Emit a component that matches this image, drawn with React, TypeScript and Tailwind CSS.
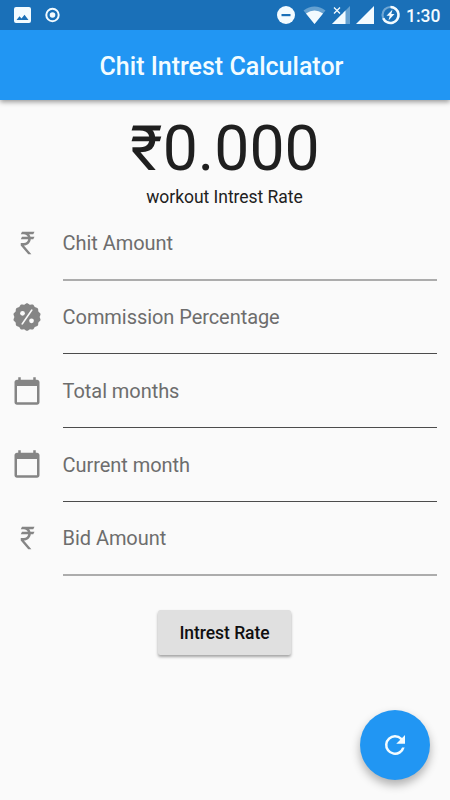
import React from "react";

function Rupee() {
  return (
    <svg viewBox="0 0 24 24" className="h-[30px] w-[30px]" fill="currentColor">
      <path d="M8,3H18L17,5H13.74C14.22,5.58 14.58,6.26 14.79,7H18L17,9H15C14.75,11.57 12.74,13.63 10.2,13.96V14H9.5L15.5,21H13L7,14V12H9.5C11.26,12 12.72,10.7 12.96,9H7L8,7H12.66C12.1,5.82 10.9,5 9.5,5H7L8,3Z" />
    </svg>
  );
}

const badgePoints = Array.from({ length: 140 }, (_, i) => {
  const a = (i / 140) * Math.PI * 2;
  const r = 10.6 + 0.45 * Math.cos(a * 14);
  return `${(12 + r * Math.sin(a)).toFixed(2)},${(12 - r * Math.cos(a)).toFixed(2)}`;
}).join(" ");

function PercentBadge() {
  return (
    <svg viewBox="0 0 24 24" className="h-[30px] w-[30px]">
      <polygon points={badgePoints} fill="currentColor" />
      <circle cx="8.4" cy="9" r="1.900" fill="#fafafa" />
      <circle cx="15.6" cy="15" r="1.900" fill="#fafafa" />
      <path d="M15.800 6.500 8.200 17.500" stroke="#fafafa" strokeWidth="1.400" strokeLinecap="round" />
    </svg>
  );
}

function Calendar() {
  return (
    <svg viewBox="0 0 24 24" className="h-[30px] w-[30px]" fill="currentColor">
      <path d="M20 3h-1V1h-2v2H7V1H5v2H4c-1.100 0-2 .9-2 2v16c0 1.100.9 2 2 2h16c1.100 0 2-.9 2-2V5c0-1.100-.9-2-2-2zm0 18H4V8h16v13z" />
    </svg>
  );
}

const fields = [
  { label: "Chit Amount", icon: Rupee, line: "h-[2px] bg-[#acacac]" },
  { label: "Commission Percentage", icon: PercentBadge, line: "h-px bg-[#4c4c4c]" },
  { label: "Total months", icon: Calendar, line: "h-px bg-[#4c4c4c]" },
  { label: "Current month", icon: Calendar, line: "h-px bg-[#4c4c4c]" },
  { label: "Bid Amount", icon: Rupee, line: "h-[2px] bg-[#acacac]" },
];

function StatusBar() {
  return (
    <div className="flex h-[30px] items-center bg-[#1a70b8] text-[#f3fbff]">
      <svg viewBox="0 0 70 30" className="h-[30px] w-[70px]" fill="currentColor">
        <path fillRule="evenodd" d="M16 7h13a2 2 0 0 1 2 2v12a2 2 0 0 1-2 2H16a2 2 0 0 1-2-2V9a2 2 0 0 1 2-2zM16.500 20h12l-4-5.200-3 3.600-2-2.200z" />
        <circle cx="52.500" cy="15" r="6.200" fill="none" stroke="currentColor" strokeWidth="2" />
        <circle cx="52.500" cy="15" r="2.800" />
      </svg>
      <svg viewBox="270 0 134 30" className="ml-[200px] h-[30px] w-[134px]" fill="currentColor">
        <circle cx="286" cy="15" r="9" />
        <path d="M281.500 14h9v2.200h-9z" fill="#1a70b8" />
        <path d="M303.500 10.500Q314.500 2.500 325.500 10.500L314.500 24z" opacity=".35" />
        <path d="M306 13.500Q314.500 7.500 323 13.500L314.500 24z" />
        <path d="M350 6v18h-18z" opacity=".35" />
        <path d="M345.500 10.500V24H332z" />
        <path d="M331.500 5.500h11v8h-11z" fill="#1a70b8" />
        <path d="m334 7.500 6 6m0-6-6 6" stroke="currentColor" strokeWidth="1.300" />
        <path d="M374 6v18h-18z" />
        <circle cx="390.500" cy="15" r="8" fill="none" stroke="currentColor" strokeWidth="2.200" opacity=".4" />
        <path d="M390.500 7a8 8 0 1 1-7.300 11.200" fill="none" stroke="currentColor" strokeWidth="2.500" />
        <path d="m392.500 9.500-6 6.300h3.200l-1.200 4.700 6-6.500h-3.200z" />
      </svg>
      <span className="ml-[2px] pt-px text-[17.500px] font-medium leading-[30px]">1:30</span>
    </div>
  );
}

export default function App() {
  return (
    <div className="flex h-[800px] w-[450px] flex-col overflow-hidden bg-[#fafafa] font-['Roboto',sans-serif]">
      <header className="z-10 shadow-[0_2px_5px_rgba(0,0,0,0.4)]">
        <StatusBar />
        <div className="flex h-[70px] items-center justify-center bg-[#2196f3]">
          <h1 className="whitespace-nowrap pr-[7px] pt-[3px] text-[25px] font-medium leading-[30px] text-[#f3fcff]">Chit Intrest Calculator</h1>
        </div>
      </header>
      <main className="flex flex-col items-center">
        <div className="mt-[11px] h-[76px] whitespace-nowrap text-[62.500px] leading-[76px] text-[#1f1f1f]">₹0.000</div>
        <p className="h-[21px] whitespace-nowrap pr-px text-[17.500px] leading-[21px] tracking-[-0.030px] text-[#212121]">workout Intrest Rate</p>
        <div className="mt-[5px] w-full pl-[12.400px] pr-[12.600px]">
          {fields.map(({ label, icon: Icon, line }) => (
            <div key={label} className="flex h-[73.800px]">
              <div className="w-[50.200px] pt-[15px] text-[#858585]">
                <Icon />
              </div>
              <div className="flex-1">
                <div className="h-[66.200px] pt-[18.300px] text-[20px] leading-[24px] tracking-[-0.060px] text-[#6d6d6d]">{label}</div>
                <div className={line} />
              </div>
            </div>
          ))}
        </div>
        <button className="mr-px mt-[28px] h-[45px] w-[133px] rounded-[2.500px] bg-[#e0e0e0] pt-px text-[17.500px] font-medium tracking-[-0.050px] text-[#101010] shadow-[0_2px_3px_rgba(0,0,0,0.35)]">
          Intrest Rate
        </button>
      </main>
      <button className="mb-[20px] mr-[20px] mt-auto flex h-[70px] w-[70px] shrink-0 items-center justify-center self-end rounded-full bg-[#2196f3] text-[#f3fcff] shadow-[0_5px_10px_rgba(0,0,0,0.3)]">
        <svg viewBox="0 0 24 24" className="h-[30px] w-[30px]" fill="currentColor">
          <path d="M17.650 6.350A7.958 7.958 0 0 0 12 4a8 8 0 1 0 7.730 10h-2.080A6 6 0 1 1 12 6c1.660 0 3.140.69 4.220 1.780L13 11h7V4z" />
        </svg>
      </button>
    </div>
  );
}
